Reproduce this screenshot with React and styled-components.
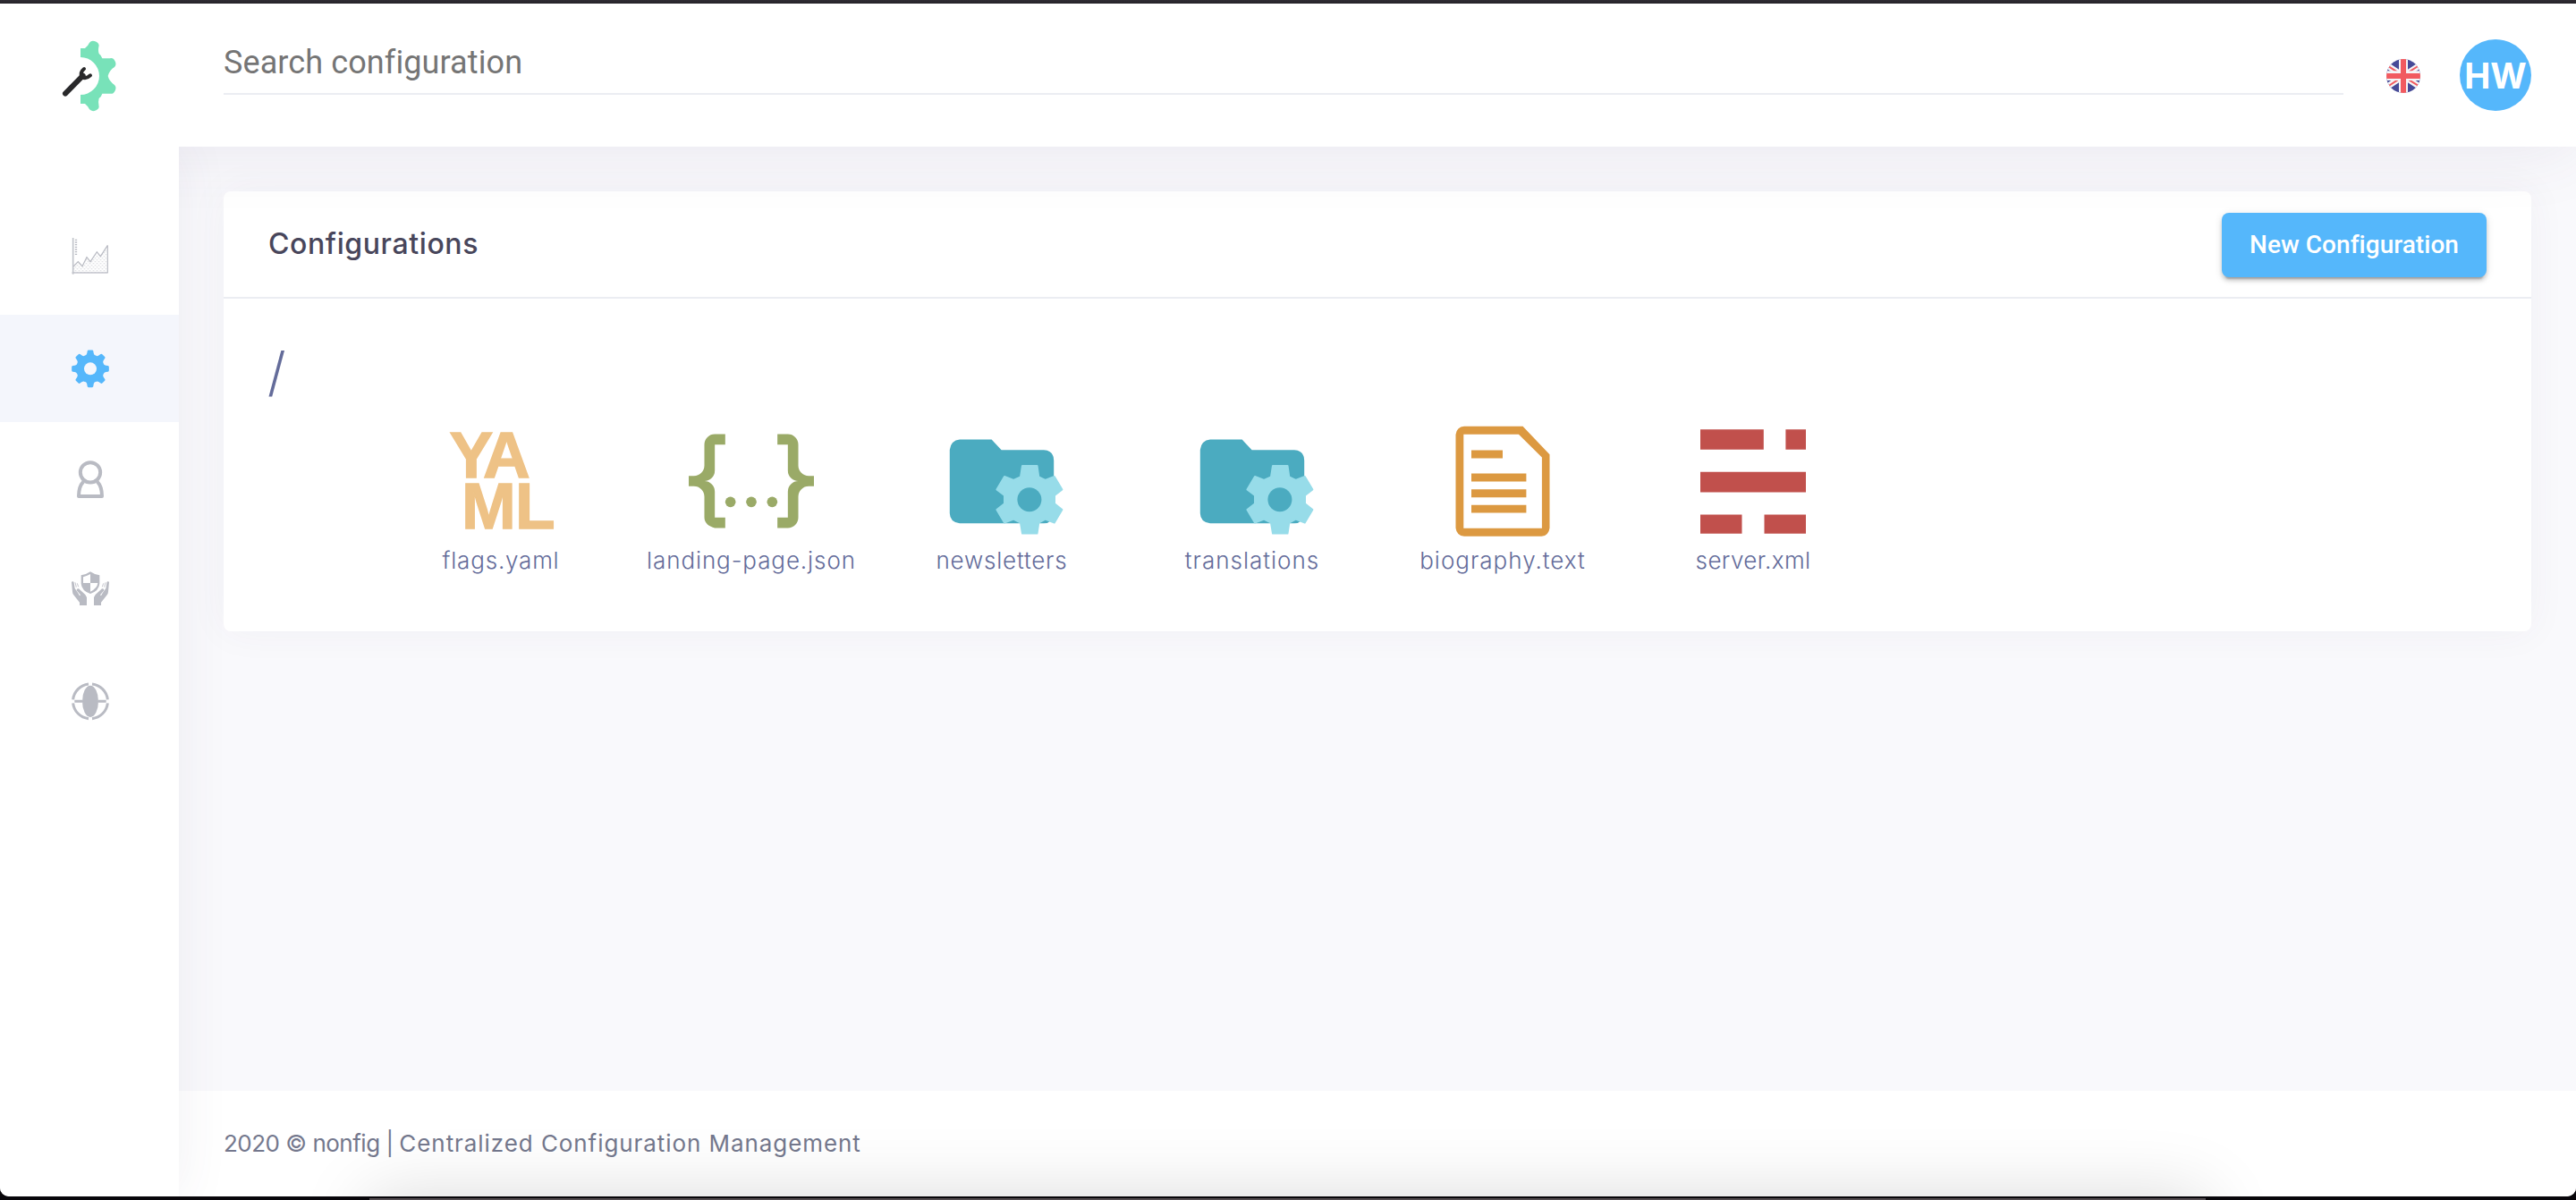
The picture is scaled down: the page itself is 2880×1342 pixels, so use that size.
import React, { useState } from 'react';
import styled, { createGlobalStyle, css } from 'styled-components';

const GlobalStyle = createGlobalStyle`
	* {
		box-sizing: border-box;
	}
	body {
		margin: 0;
		background: #0b090c;
		font-family: Inter, "Open Sans", sans-serif;
	}
`

const Frame = styled.div`
	position: relative;
	height: 1342px;
	padding: 4px 0;
	overflow: hidden;
	background: linear-gradient(#302d34 0, #252328 4px, #08060a 5px);
`

const Page = styled.div`
	position: relative;
	display: flex;
	flex-direction: column;
	height: 1334px;
	overflow: hidden;
	border-radius: 0 0 10px 10px;
	background: #f9f9fc;
`

const Header = styled.header`
	position: relative;
	z-index: 2;
	display: flex;
	flex: none;
	height: 160px;
	background: #fff;
	box-shadow: 0 0 80px rgba(82, 63, 105, 0.1);
`

const Brand = styled.a`
	display: flex;
	justify-content: center;
	width: 200px;
	padding-top: 32px;
`

const SearchInput = styled.input`
	flex: 1;
	height: 70px;
	margin: 32px 48px 0 50px;
	padding: 0 0 1px;
	border: 0;
	border-bottom: 2px solid #ebedf2;
	outline: none;
	background: transparent;
	font-family: Roboto, sans-serif;
	font-size: 36px;
	letter-spacing: 0.1px;
	&::placeholder {
		color: #757575;
		opacity: 1;
	}
`

const Language = styled.button`
	display: flex;
	width: 38px;
	height: 38px;
	margin: 62px 44px 0 0;
	padding: 0;
	border: 0;
	background: none;
`

const Avatar = styled.div`
	display: flex;
	align-items: center;
	justify-content: center;
	width: 80px;
	height: 80px;
	margin: 40px 50px 0 0;
	border-radius: 50%;
	background: #55b7fb;
	color: #fff;
	font-size: 39px;
	font-weight: 700;
`

const Body = styled.div`
	display: flex;
	flex: 1;
	min-height: 0;
`

const Sidebar = styled.nav`
	position: relative;
	z-index: 3;
	display: flex;
	flex: none;
	flex-direction: column;
	gap: 4px;
	width: 200px;
	padding-top: 64px;
	background: #fff;
	box-shadow: 0 0 56px rgba(82, 63, 105, 0.08);
	clip-path: inset(0 -80px 0 0);
`

const MenuItem = styled.a`
	display: flex;
	align-items: center;
	justify-content: center;
	height: 120px;
	padding-left: 2px;
	color: #b9bbc3;
	${(props) => props.$active && css`
		background: #f4f6fc;
		color: #55b7fb;
	`}
`

const Content = styled.div`
	display: flex;
	flex: 1;
	flex-direction: column;
	min-width: 0;
`

const Main = styled.main`
	flex: 1;
	padding: 50px 50px 0;
`

const Card = styled.section`
	height: 492px;
	border-radius: 8px;
	background: #fff;
	box-shadow: 0 0 44px rgba(82, 63, 105, 0.05);
`

const CardHeader = styled.div`
	display: flex;
	align-items: center;
	justify-content: space-between;
	height: 120px;
	padding: 0 50px;
	border-bottom: 2px solid #ebedf2;
`

const Title = styled.h3`
	margin: 0 0 1px;
	color: #48465b;
	font-size: 32px;
	font-weight: 500;
	letter-spacing: 0.6px;
`

const Button = styled.button`
	width: 296px;
	height: 72px;
	margin-top: 1px;
	padding: 0;
	border: 0;
	border-radius: 8px;
	background: #55b7fb;
	box-shadow: 0 6px 2px -4px rgba(0, 0, 0, 0.2), 0 4px 4px rgba(0, 0, 0, 0.14), 0 2px 10px rgba(0, 0, 0, 0.12);
	color: #fff;
	font-family: Roboto, sans-serif;
	font-size: 28px;
	font-weight: 500;
	letter-spacing: 0.04px;
`

const Path = styled.div`
	height: 134px;
	padding: 48px 49px 0;
	color: #646c9a;
	font-size: 59px;
	font-weight: 300;
	line-height: 68px;
`

const Files = styled.div`
	display: flex;
	padding-left: 170px;
`

const File = styled.div`
	display: flex;
	flex-direction: column;
	align-items: center;
	width: 280px;
`

const FileName = styled.span`
	margin-top: 3px;
	color: #646c9a;
	font-size: 26px;
	font-weight: 300;
	line-height: 32px;
	letter-spacing: ${(props) => props.$spacing}px;
`

const Footer = styled.footer`
	display: flex;
	align-items: center;
	flex: none;
	height: 118px;
	padding: 0 50px 2px;
	background: #fff;
	color: #74788d;
	font-size: 26px;
	white-space: pre;
`

const Copyright = styled.span`
	letter-spacing: -0.5px;
`

const Slogan = styled.span`
	letter-spacing: 0.93px;
`

// soft shade and edge of the window lying below this one
const DockShade = styled.div`
	position: absolute;
	z-index: 4;
	left: 413px;
	right: 414px;
	top: 1334px;
	height: 100px;
	box-shadow: 0 0 80px rgba(0, 0, 0, 0.15);
`

const DockEdge = styled.div`
	position: absolute;
	left: 413px;
	right: 414px;
	bottom: 0;
	height: 2px;
	background: #534c50;
`

const Logo = () => (
	<svg width="80" height="100" viewBox="0 0 240 300">
		<path
			fill="#78e2b9"
			d="M90 54H105Q115 46 120 35Q126 27 137 30Q150 34 152 44Q148 62 152 72Q160 78 163 88H188Q201 84 207 100Q211 110 204 117Q188 126 182 147Q186 164 204 177Q211 184 207 194Q201 209 188 206H163Q160 216 152 222Q148 234 152 251Q150 260 137 264Q126 266 120 259Q115 248 105 240H90V210A63 63 0 0 0 90 84Z"
		/>
		<g fill="none" stroke="#29292b" strokeLinecap="round">
			<path strokeWidth="18" d="M39 206L98 146" />
			<path strokeWidth="12" d="M102 123Q88 134 94 150Q108 159 123 145" />
		</g>
	</svg>
)

const UkFlag = () => (
	<svg width="38" height="38" viewBox="0 0 114 114">
		<clipPath id="flagClip">
			<circle cx="57" cy="57" r="57" />
		</clipPath>
		<g clipPath="url(#flagClip)">
			<path fill="#464a97" d="M0 0H114V114H0Z" />
			<path stroke="#f5f5f7" strokeWidth="20" d="M-10 13L124 101M-10 101L124 13" />
			<path stroke="#f15b60" strokeWidth="6" d="M8 25L36 43M76 43L106 24M8 90L38 70M76 70L106 89" />
			<path fill="#f5f5f7" d="M42 0H72V114H42ZM0 40H114V72H0Z" />
			<path fill="#f15b60" d="M48 0H66V114H48ZM0 48H114V66H0Z" />
		</g>
	</svg>
)

const ChartIcon = () => (
	<svg width="60" height="60" viewBox="5 6 180 180" fill="none" stroke="currentColor">
		<pattern id="chartDots" width="12" height="12" patternUnits="userSpaceOnUse">
			<path fill="currentColor" stroke="none" d="M2 1H5V4H2ZM8 7H11V10H8Z" />
		</pattern>
		<path fill="url(#chartDots)" stroke="none" d="M38 126L54 110L68 125L83 95L95 110L117 77L129 92L154 55V147H38Z" />
		<path strokeWidth="5" opacity="0.85" d="M37 30V152M33 147H154" />
		<path strokeWidth="3.5" d="M153 55V147M38 126L54 110L68 125L83 95L95 110L117 77L129 92L153 55" />
		<path strokeWidth="7" strokeDasharray="4 4" d="M47 35V91" />
	</svg>
)

const TEETH = [0, 45, 90, 135, 180, 225, 270, 315];

const GearIcon = () => (
	<svg width="60" height="60" viewBox="-90 -91 180 180" fill="currentColor">
		{TEETH.map((angle) => (
			<path
				key={angle}
				transform={`rotate(${angle})`}
				d="M-18.4 -44.3C-13 -44.3 -11 -50 -10 -59Q-9.5 -62.5 -6 -62.5H6Q9.5 -62.5 10 -59C11 -50 13 -44.3 18.4 -44.3L0 0Z"
			/>
		))}
		<circle r="46" />
		<circle r="21" fill="#f4f6fc" />
	</svg>
)

const UserIcon = () => (
	<svg width="60" height="60" viewBox="213 498 180 180" fill="none" stroke="currentColor" strokeWidth="12" strokeLinejoin="round">
		<circle cx="303" cy="565" r="33.5" />
		<path d="M280 596Q264 612 264 645H342Q342 612 326 596" />
	</svg>
)

const Hand = (props) => (
	<g {...props}>
		<path d="M30 63Q31 60 35 61Q38 62 38 66L41 84L52 100L57 109L60 106L47 91Q46 84 54 85L76 105Q82 112 81 122V141H57V131L38 107Q33 102 33 95Z" />
		<path fill="none" stroke="currentColor" strokeWidth="2.5" d="M42 64L46 80M49 67L53 79" />
	</g>
)

const SecurityIcon = () => (
	<svg width="60" height="60" viewBox="3 0 180 180" fill="currentColor">
		<path
			fillRule="evenodd"
			d="M93 28Q107 38 124 40V68Q122 92 93 102Q64 92 62 68V40Q79 38 93 28ZM93 36Q83 42 69 46V66H93ZM93 66V95Q116 84 118 66Z"
		/>
		<Hand />
		<Hand transform="translate(186 0) scale(-1 1)" />
	</svg>
)

const GlobeIcon = () => (
	<svg width="60" height="60" viewBox="213 1242 180 180" fill="none" stroke="currentColor" strokeWidth="9">
		<path d="M309 1275A58.500 58.500 0 0 1 361 1327M361 1339A58.500 58.500 0 0 1 309 1391M297 1391A58.500 58.500 0 0 1 245 1339M245 1327A58.500 58.500 0 0 1 297 1275" />
		<path d="M250 1333H276M330 1333H356" />
		<ellipse cx="303" cy="1333" rx="27" ry="53" fill="currentColor" stroke="none" />
	</svg>
)

const FileSvg = styled.svg`
	display: block;
	width: 140px;
	height: 140px;
	font-family: "Liberation Sans", Arial, sans-serif;
	font-size: 73px;
	font-weight: 700;
`

const YamlIcon = () => (
	<FileSvg viewBox="0 0 140 140" fill="#eec286" stroke="#eec286" strokeWidth="1.4">
		<text>
			<tspan x="12.5 50" y="66">YA</tspan>
			<tspan x="26 86" y="122.700">ML</tspan>
		</text>
	</FileSvg>
)

const JsonIcon = () => (
	<FileSvg viewBox="0 0 24 24" fill="#9aaa67">
		<path d="M5 3H7V5H5V10A2 2 0 0 1 3 12A2 2 0 0 1 5 14V19H7V21H5C3.930 20.730 3 20.100 3 19V15A2 2 0 0 0 1 13H0V11H1A2 2 0 0 0 3 9V5A2 2 0 0 1 5 3M19 3A2 2 0 0 1 21 5V9A2 2 0 0 0 23 11H24V13H23A2 2 0 0 0 21 15V19A2 2 0 0 1 19 21H17V19H19V14A2 2 0 0 1 21 12A2 2 0 0 1 19 10V5H17V3H19Z" />
		<circle cx="8" cy="16" r="1" />
		<circle cx="12" cy="16" r="1" />
		<circle cx="16" cy="16" r="1" />
	</FileSvg>
)

const FolderIcon = () => (
	<FileSvg viewBox="0 0 140 140">
		<path fill="#4babc0" d="M23 23.500H58.600L69.600 35.300H117Q128.200 36 128.200 47V106Q127 117.300 117 117.300H23Q12 116 11.800 106V35Q13 24.500 23 23.500Z" />
		<path
			fill="#97dce9"
			stroke="#97dce9"
			strokeLinejoin="round"
			strokeWidth="2"
			d="M93 53H109.500L111.300 65.300L118.600 69L128.800 65L137.400 79.500L129 86V95.300L137.400 102L128.800 116.500L118.600 112.600L111.300 116.500L109.500 128.500H93L91 116.500L83.200 112.600L73 116.500L64.400 102L73 95.300V86L64.400 79.500L73 65L83.200 69L91 65.300Z"
		/>
		<circle cx="100.900" cy="90.800" r="13.500" fill="#4babc0" />
	</FileSvg>
)

const TextIcon = () => (
	<FileSvg viewBox="0 0 140 140" fill="#dc9941">
		<path
			fillRule="evenodd"
			d="M27 8.800H92.500L122.500 40.300V122.500Q121.500 131 113.500 131.800H27Q18.500 131 17.500 122.500V18Q18.500 9.500 27 8.800ZM26.300 17.800V122.700H113.900V43.500L87.900 17.800Z"
		/>
		<path d="M35 35.500H70V44.400H35ZM35 61.500H96.400V70.500H35ZM35 79.200H96.400V88.200H35ZM35 96.700H96.400V105.500H35Z" />
	</FileSvg>
)

const XmlIcon = () => (
	<FileSvg viewBox="0 0 140 140" fill="#c1504c">
		<path d="M11 12.200H81.800V34.800H11ZM106.400 12.200H129V34.800H106.400ZM11 59.800H129V82.500H11ZM11 107.500H57.500V128.800H11ZM82.500 107.500H129V128.800H82.500Z" />
	</FileSvg>
)

const menu = [
	{ id: 'dashboard', Icon: ChartIcon },
	{ id: 'configurations', Icon: GearIcon },
	{ id: 'users', Icon: UserIcon },
	{ id: 'security', Icon: SecurityIcon },
	{ id: 'global', Icon: GlobeIcon },
]

const files = [
	{ name: 'flags.yaml', Icon: YamlIcon, spacing: 0.8 },
	{ name: 'landing-page.json', Icon: JsonIcon, spacing: 0.9 },
	{ name: 'newsletters', Icon: FolderIcon, spacing: 0.8 },
	{ name: 'translations', Icon: FolderIcon, spacing: 1 },
	{ name: 'biography.text', Icon: TextIcon, spacing: 1 },
	{ name: 'server.xml', Icon: XmlIcon, spacing: 0.4 },
]

export default function App() {

	const [search, setSearch] = useState('')
	const [active, setActive] = useState('configurations')

	return (
		<>
			<GlobalStyle />
			<Frame>
				<Page>
					<Header>
						<Brand>
							<Logo />
						</Brand>
						<SearchInput
							type="text"
							placeholder="Search configuration"
							value={search}
							onChange={(e) => setSearch(e.target.value)}
						/>
						<Language>
							<UkFlag />
						</Language>
						<Avatar>HW</Avatar>
					</Header>
					<Body>
						<Sidebar>
							{menu.map(({ id, Icon }) => (
								<MenuItem key={id} $active={id === active} onClick={() => setActive(id)}>
									<Icon />
								</MenuItem>
							))}
						</Sidebar>
						<Content>
							<Main>
								<Card>
									<CardHeader>
										<Title>Configurations</Title>
										<Button>New Configuration</Button>
									</CardHeader>
									<Path>/</Path>
									<Files>
										{files.map(({ name, Icon, spacing }) => (
											<File key={name}>
												<Icon />
												<FileName $spacing={spacing}>{name}</FileName>
											</File>
										))}
									</Files>
								</Card>
							</Main>
							<Footer>
								<Copyright>{'2020 © nonfig | '}</Copyright>
								<Slogan>Centralized Configuration Management</Slogan>
							</Footer>
						</Content>
					</Body>
					<DockShade />
				</Page>
				<DockEdge />
			</Frame>
		</>
	);

}
